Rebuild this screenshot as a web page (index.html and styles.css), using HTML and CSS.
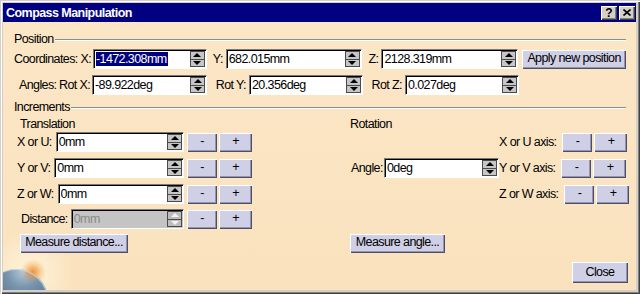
FILE: index.html
```html
<!DOCTYPE html>
<html lang="en">
<head>
    <meta charset="UTF-8">
    <title>Compass Manipulation</title>
    <link rel="stylesheet" href="styles.css">
</head>
<body>
    <div class="window">
        <div class="titlebar">
            <span class="title">Compass Manipulation</span>
            <span class="cap">?</span>
            <span class="cap">
                <svg width="8" height="7" viewBox="0 0 8 7"><path d="M0.5 0.5 L7.5 6.5 M7.5 0.5 L0.5 6.5" stroke="#000" stroke-width="1.6"/></svg>
            </span>
        </div>

        <div class="panel">
            <div class="globe"></div>

            <div class="legend">Position<span class="rule"></span></div>

            <div class="row row-coords">
                <span class="lbl l-coord">Coordinates: X:</span>
                <div class="field w114"><span class="val"><span class="sel">-1472.308mm</span></span><span class="spin"><i class="up"></i><i class="dn"></i></span></div>
                <span class="lbl l-y">Y:</span>
                <div class="field w136"><span class="val">682.015mm</span><span class="spin"><i class="up"></i><i class="dn"></i></span></div>
                <span class="lbl l-z">Z:</span>
                <div class="field w137"><span class="val">2128.319mm</span><span class="spin"><i class="up"></i><i class="dn"></i></span></div>
                <button class="btn apply">Apply new position</button>
            </div>

            <div class="row row-angles">
                <span class="lbl l-angles">Angles:</span>
                <span class="lbl l-rotx">Rot X:</span>
                <div class="field w115"><span class="val">-89.922deg</span><span class="spin"><i class="up"></i><i class="dn"></i></span></div>
                <span class="lbl l-rot">Rot Y:</span>
                <div class="field w114"><span class="val">20.356deg</span><span class="spin"><i class="up"></i><i class="dn"></i></span></div>
                <span class="lbl l-rot">Rot Z:</span>
                <div class="field w114"><span class="val">0.027deg</span><span class="spin"><i class="up"></i><i class="dn"></i></span></div>
            </div>

            <div class="legend legend-inc">Increments<span class="rule"></span></div>

            <div class="increments">
                <div class="sub sub-left">Translation</div>
                <div class="sub">Rotation</div>

                <div class="row">
                    <div class="tfield">
                        <span class="lbl tl">X or U:</span>
                        <div class="field grow"><span class="val">0mm</span><span class="spin"><i class="up"></i><i class="dn"></i></span></div>
                    </div>
                    <button class="btn minus">-</button>
                    <button class="btn plus">+</button>
                </div>
                <div class="row row-end">
                    <span class="lbl">X or U axis:</span>
                    <button class="btn minus">-</button>
                    <button class="btn plus end-2">+</button>
                </div>

                <div class="row">
                    <div class="tfield">
                        <span class="lbl tl">Y or V:</span>
                        <div class="field grow"><span class="val">0mm</span><span class="spin"><i class="up"></i><i class="dn"></i></span></div>
                    </div>
                    <button class="btn minus">-</button>
                    <button class="btn plus">+</button>
                </div>
                <div class="row">
                    <span class="lbl l-angle">Angle:</span>
                    <div class="field w115"><span class="val">0deg</span><span class="spin"><i class="up"></i><i class="dn"></i></span></div>
                    <span class="lbl push">Y or V axis:</span>
                    <button class="btn minus">-</button>
                    <button class="btn plus end-3">+</button>
                </div>

                <div class="row">
                    <div class="tfield">
                        <span class="lbl tl">Z or W:</span>
                        <div class="field grow"><span class="val">0mm</span><span class="spin"><i class="up"></i><i class="dn"></i></span></div>
                    </div>
                    <button class="btn minus">-</button>
                    <button class="btn plus">+</button>
                </div>
                <div class="row row-end">
                    <span class="lbl">Z or W axis:</span>
                    <button class="btn minus">-</button>
                    <button class="btn plus">+</button>
                </div>

                <div class="row">
                    <div class="tfield">
                        <span class="lbl tl dist">Distance:</span>
                        <div class="field grow disabled"><span class="val">0mm</span><span class="spin"><i class="up"></i><i class="dn"></i></span></div>
                    </div>
                    <button class="btn minus">-</button>
                    <button class="btn plus">+</button>
                </div>
                <div></div>

                <div class="row"><button class="btn measure-d">Measure distance...</button></div>
                <div class="row"><button class="btn measure-a">Measure angle...</button></div>
            </div>

            <div class="footer">
                <button class="btn close">Close</button>
            </div>
        </div>
    </div>
</body>
</html>
```

FILE: styles.css
```css
* {
    box-sizing: border-box;
}

body {
    margin: 0;
    font-family: "Liberation Sans", Arial, sans-serif;
    font-size: 12.5px;
    letter-spacing: -0.6px;
    color: #000;
}

.window {
    width: 640px;
    height: 294px;
    background: #d4d0c8;
    padding: 3px 4px 4px 3px;
    box-shadow: inset 1px 1px #d4d0c8, inset 2px 2px #fff, inset -1px -1px #404040, inset -2px -2px #808080;
    display: flex;
    flex-direction: column;
}

.titlebar {
    height: 19px;
    background: #000080;
    color: #fff;
    display: flex;
    align-items: center;
    padding: 0 1px 0 3px;
}

.title {
    flex: 1;
    font-weight: bold;
    font-size: 12.5px;
    letter-spacing: -0.55px;
}

.cap {
    width: 16px;
    height: 14px;
    margin-left: 2px;
    background: #d4d0c8;
    color: #000;
    font-weight: bold;
    font-size: 12px;
    letter-spacing: 0;
    line-height: 14px;
    display: flex;
    justify-content: center;
    align-items: center;
    box-shadow: inset 1px 1px #fff, inset -1px -1px #404040, inset -2px -2px #808080;
}

.panel {
    flex: 1;
    position: relative;
    z-index: 0;
    overflow: hidden;
    padding: 0 10px 0 11px;
    background:
        radial-gradient(circle 13px at 30px 250px, rgba(238, 138, 50, 0.95), rgba(246, 180, 105, 0.5) 60%, transparent),
        radial-gradient(circle 44px at 26px 252px, rgba(255, 246, 220, 0.95), transparent),
        linear-gradient(#fbe6c6, #fae2be);
}

.globe {
    position: absolute;
    z-index: -1;
    left: -17px;
    top: 247px;
    width: 62px;
    height: 62px;
    border-radius: 50%;
    background:
        radial-gradient(circle 10px at 46px 4px, rgba(236, 140, 60, 0.8), transparent),
        radial-gradient(circle at 60% 4%, #b4c8d6, #7a96ae 22%, #58768f 50%, #2a405a 88%);
    box-shadow: inset -1px 1px 1px rgba(210, 228, 240, 0.7);
}

.legend {
    display: flex;
    align-items: center;
    height: 15px;
    line-height: 15px;
    margin-top: 10px;
}

.legend .rule {
    flex: 1;
    height: 2px;
    margin-left: 1px;
    border-top: 1px solid #8c8c8c;
    border-bottom: 1px solid #fff;
}

.legend-inc {
    margin-top: 5px;
}

.row {
    display: flex;
    align-items: center;
    height: 20px;
    line-height: 15px;
}

.row-coords {
    margin-top: 2px;
}

.row-angles {
    margin-top: 6px;
}

.lbl {
    white-space: nowrap;
    padding-right: 3px;
}

.l-coord { width: 79px; text-align: right; }
.l-y { width: 19px; text-align: right; }
.l-z { width: 20px; text-align: right; }
.l-angles { width: 40px; margin-left: 5px; }
.l-rotx { width: 33px; text-align: right; }
.l-rot { width: 42px; text-align: right; }
.l-angle { width: 34px; padding-left: 1px; }

.field {
    height: 20px;
    background: #fff;
    border: 1px solid;
    border-color: #7a7a7a #fff #fff #7a7a7a;
    box-shadow: inset 1px 1px #000;
    display: flex;
    align-items: center;
    padding: 0 1px 0 2px;
}

.w114 { width: 114px; }
.w115 { width: 115px; }
.w136 { width: 136px; }
.w137 { width: 137px; }

.field .val {
    flex: 1;
    white-space: nowrap;
    overflow: hidden;
}

.sel {
    background: #000080;
    color: #fff;
    padding-right: 1px;
}

.spin {
    width: 15px;
    height: 16px;
    display: flex;
    flex-direction: column;
}

.spin i {
    flex: 1;
    background: #c6c6c6;
    border: 1px solid #4a4a4a;
    display: flex;
    justify-content: center;
    align-items: center;
}

.spin i + i {
    border-top: 0;
}

.spin i::before {
    content: "";
    border-left: 4px solid transparent;
    border-right: 4px solid transparent;
}

.spin .up::before {
    border-bottom: 4px solid #000;
}

.spin .dn::before {
    border-top: 4px solid #000;
}

.field.disabled {
    background: #c4c4c4;
    color: #8a8a8a;
}

.field.disabled .spin i {
    background: #bdbdbd;
}

.field.disabled .spin i::before {
    border-bottom-color: #f4f4f4;
    border-top-color: #f4f4f4;
}

.btn {
    height: 19px;
    padding: 0 0 1px;
    border: 0;
    font: inherit;
    letter-spacing: inherit;
    white-space: nowrap;
    color: #000;
    background: #cfcfe6;
    box-shadow: inset 1px 1px #fff, inset -1px -1px #4e4e66, inset -2px -2px #9494b0;
    display: flex;
    justify-content: center;
    align-items: center;
}

.apply {
    width: 104px;
    margin-left: 4px;
}

.increments {
    display: grid;
    grid-template-columns: 336px 1fr;
    grid-template-rows: 17px 26px 26px 25px 24px 19px;
    align-items: start;
}

.sub {
    align-self: end;
    line-height: 15px;
}

.sub-left {
    padding-left: 6px;
}

.tfield {
    width: 170px;
    display: flex;
    align-items: center;
}

.tl {
    margin-left: 3px;
    padding-right: 4px;
}

.tl.dist {
    margin-left: 7px;
    padding-right: 3px;
}

.grow {
    flex: 1;
}

.minus {
    width: 30px;
    margin-left: 3px;
}

.plus {
    width: 33px;
    margin-left: 2px;
}

.row-end {
    justify-content: flex-end;
}

.end-2 {
    margin-right: 2px;
}

.end-3 {
    margin-right: 3px;
}

.push {
    margin-left: auto;
}

.measure-d {
    width: 108px;
    margin-left: 6px;
}

.measure-a {
    width: 95px;
}

.footer {
    display: flex;
    justify-content: flex-end;
    margin-top: 10px;
    margin-right: -2px;
}

.close {
    width: 56px;
    height: 21px;
}
```
